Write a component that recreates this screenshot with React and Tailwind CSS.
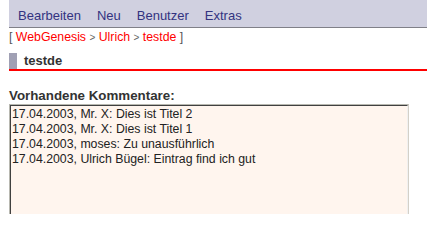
// Kommentar-Ansicht im alten WebGenesis-Stil: Menüleiste, Pfad, Titel, Listbox.
const MENU = ['Bearbeiten', 'Neu', 'Benutzer', 'Extras'];

const KOMMENTARE = [
  '17.04.2003, Mr. X: Dies ist Titel 2',
  '17.04.2003, Mr. X: Dies ist Titel 1',
  '17.04.2003, moses: Zu unausführlich',
  '17.04.2003, Ulrich Bügel: Eintrag find ich gut',
];

export default function App() {
  return (
    <div className="h-[214px] bg-white pl-[9px] font-['Liberation_Sans',Arial,sans-serif] overflow-hidden">
      <div className="h-[28px] bg-[#d0d0e0] border-b border-[#808088] flex items-center pl-px pt-[3px]">
        {MENU.map((m) => (
          <span key={m} className="px-2 text-[13px] leading-[15px] text-[#333380]">{m}</span>
        ))}
      </div>

      <div className="mt-[2px] text-[12.3px] leading-[14px] text-[#555]">
        [ <span className="text-[#ff0000]">WebGenesis</span>{' '}
        <span className="text-[10px] text-[#666]">&gt;</span>{' '}
        <span className="text-[#ff0000]">Ulrich</span>{' '}
        <span className="text-[10px] text-[#666]">&gt;</span>{' '}
        <span className="text-[#ff0000]">testde</span> ]
      </div>

      <div className="mt-[8px] flex items-stretch h-[16px]">
        <div className="w-[8px] bg-[#a0a0b4]" />
        <span className="ml-[7px] text-[13px] leading-[16px] font-bold text-[#333]">testde</span>
      </div>
      <div className="h-[2px] bg-[#ff0000]" />

      <div className="mt-[17px] text-[13.33px] leading-[16px] font-bold text-[#333]">Vorhandene Kommentare:</div>

      <div className="w-[400px] h-[130px] border-t border-l border-[#b8b8b0] border-r border-r-[#d4d0c8]">
        <div className="h-full border-t border-l border-[#404040] border-r border-r-[#f0f0f0] bg-[#fff5ee] pl-px pt-px">
          {KOMMENTARE.map((k) => (
            <div key={k} className="text-[12.3px] leading-[15px] text-[#222] whitespace-nowrap">{k}</div>
          ))}
        </div>
      </div>
    </div>
  );
}
